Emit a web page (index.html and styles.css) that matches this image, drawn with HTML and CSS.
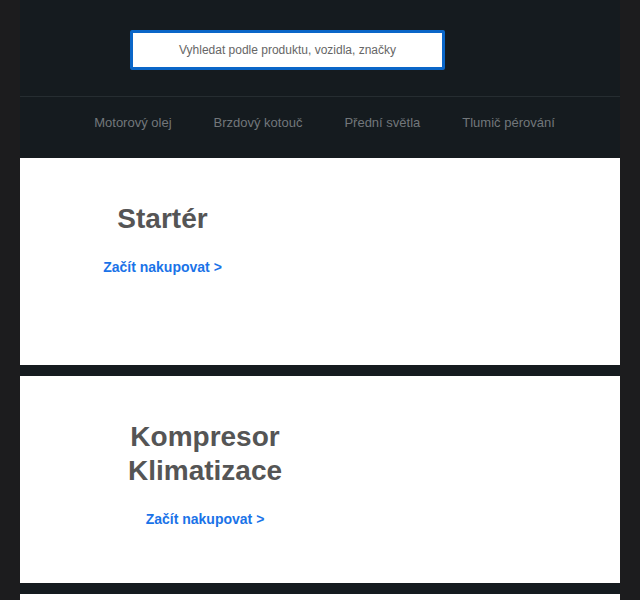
FILE: index.html
```html
<!DOCTYPE html>
<html lang="cs">
<head>
<meta charset="utf-8">
<title>Autodíly</title>
<link rel="stylesheet" href="styles.css">
</head>
<body>
<div class="page">
  <header class="header">
    <div class="search-row">
      <div class="search"><span class="search-text">Vyhledat podle produktu, vozidla, značky</span></div>
    </div>
    <nav class="nav">
      <a class="nav-link" href="#">Motorový olej</a>
      <a class="nav-link" href="#">Brzdový kotouč</a>
      <a class="nav-link" href="#">Přední světla</a>
      <a class="nav-link" href="#">Tlumič pérování</a>
    </nav>
  </header>
  <section class="promo promo--starter">
    <div class="promo-text">
      <h2 class="promo-title">Startér</h2>
      <a class="promo-link" href="#">Začít nakupovat &gt;</a>
    </div>
  </section>
  <section class="promo promo--kompresor">
    <div class="promo-text">
      <h2 class="promo-title">Kompresor Klimatizace</h2>
      <a class="promo-link" href="#">Začít nakupovat &gt;</a>
    </div>
  </section>
  <section class="promo"></section>
</div>
</body>
</html>
```
FILE: styles.css
```css
html, body {
  margin: 0;
  padding: 0;
  background: #1c1c1e;
  font-family: "Liberation Sans", Arial, sans-serif;
}
.page {
  width: 600px;
  margin: 0 auto;
  background: #151b1f;
  display: flex;
  flex-direction: column;
  gap: 11px;
}
.header {
  display: flex;
  flex-direction: column;
}
.search-row {
  height: 97px;
  box-sizing: border-box;
  border-bottom: 1px solid #262d31;
  display: flex;
  align-items: flex-start;
  padding-top: 30px;
}
.search {
  margin-left: 110px;
  width: 315px;
  height: 40px;
  box-sizing: border-box;
  border: 3px solid #0a66c8;
  border-radius: 2px;
  background: #fff;
  display: flex;
  align-items: center;
  justify-content: center;
}
.search-text {
  font-size: 12px;
  color: #666;
}
.nav {
  height: 61px;
  box-sizing: border-box;
  padding: 0 0 10px 9px;
  display: flex;
  align-items: center;
  justify-content: center;
  gap: 42px;
  margin-bottom: -11px;
}
.nav-link {
  color: #72777b;
  font-size: 13px;
  text-decoration: none;
}
.promo {
  background: #fff;
  height: 207px;
  box-sizing: border-box;
  padding-top: 44px;
  display: flex;
}
.promo-text {
  display: flex;
  flex-direction: column;
  align-items: center;
  text-align: center;
  gap: 23px;
}
.promo--starter .promo-text {
  margin-left: 63px;
  width: 159px;
}
.promo--kompresor .promo-text {
  margin-left: 100px;
  width: 170px;
}
.promo-title {
  margin: 0;
  font-size: 28px;
  line-height: 34px;
  font-weight: bold;
  color: #555;
}
.promo-link {
  font-size: 14px;
  line-height: 16px;
  font-weight: bold;
  color: #1a73e8;
  text-decoration: none;
}
```
